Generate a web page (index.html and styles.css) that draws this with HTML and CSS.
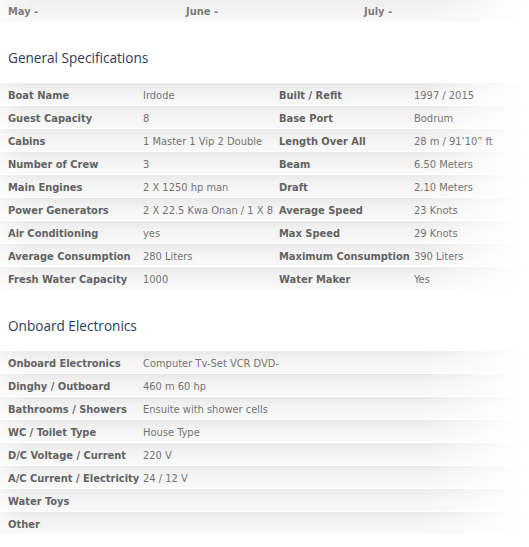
FILE: index.html
```html
<!DOCTYPE html>
<html>
<head>
<meta charset="utf-8">
<link rel="stylesheet" href="styles.css">
</head>
<body>
<div class="months">
  <span>May -</span><span>June -</span><span>July -</span>
</div>

<h2 class="section-title">General Specifications</h2>
<div class="spec-table">
  <div class="row quad"><span class="lbl">Boat Name</span><span class="val">Irdode</span><span class="lbl">Built / Refit</span><span class="val">1997 / 2015</span></div>
  <div class="row quad"><span class="lbl">Guest Capacity</span><span class="val">8</span><span class="lbl">Base Port</span><span class="val">Bodrum</span></div>
  <div class="row quad"><span class="lbl">Cabins</span><span class="val">1 Master 1 Vip 2 Double</span><span class="lbl">Length Over All</span><span class="val">28 m / 91’10” ft</span></div>
  <div class="row quad"><span class="lbl">Number of Crew</span><span class="val">3</span><span class="lbl">Beam</span><span class="val">6.50 Meters</span></div>
  <div class="row quad"><span class="lbl">Main Engines</span><span class="val">2 X 1250 hp man</span><span class="lbl">Draft</span><span class="val">2.10 Meters</span></div>
  <div class="row quad"><span class="lbl">Power Generators</span><span class="val">2 X 22.5 Kwa Onan / 1 X 8</span><span class="lbl">Average Speed</span><span class="val">23 Knots</span></div>
  <div class="row quad"><span class="lbl">Air Conditioning</span><span class="val">yes</span><span class="lbl">Max Speed</span><span class="val">29 Knots</span></div>
  <div class="row quad"><span class="lbl">Average Consumption</span><span class="val">280 Liters</span><span class="lbl">Maximum Consumption</span><span class="val">390 Liters</span></div>
  <div class="row quad"><span class="lbl">Fresh Water Capacity</span><span class="val">1000</span><span class="lbl">Water Maker</span><span class="val">Yes</span></div>
</div>

<h2 class="section-title">Onboard Electronics</h2>
<div class="spec-table">
  <div class="row duo"><span class="lbl">Onboard Electronics</span><span class="val">Computer Tv-Set VCR DVD-</span></div>
  <div class="row duo"><span class="lbl">Dinghy / Outboard</span><span class="val">460 m 60 hp</span></div>
  <div class="row duo"><span class="lbl">Bathrooms / Showers</span><span class="val">Ensuite with shower cells</span></div>
  <div class="row duo"><span class="lbl">WC / Toilet Type</span><span class="val">House Type</span></div>
  <div class="row duo"><span class="lbl">D/C Voltage / Current</span><span class="val">220 V</span></div>
  <div class="row duo"><span class="lbl">A/C Current / Electricity</span><span class="val">24 / 12 V</span></div>
  <div class="row duo"><span class="lbl">Water Toys</span><span class="val"></span></div>
  <div class="row duo"><span class="lbl">Other</span><span class="val"></span></div>
</div>
</body>
</html>
```

FILE: styles.css
```css
html, body {
  margin: 0;
  padding: 0;
  background: #ffffff;
}

body {
  font-family: "DejaVu Sans Condensed", "DejaVu Sans", sans-serif;
  font-size: 11px;
  color: #777777;
}

.months {
  display: grid;
  grid-template-columns: 178px 178px 1fr;
  align-items: center;
  height: 22px;
  background:
    linear-gradient(to right, rgba(255,255,255,0.6) 0%, rgba(255,255,255,0) 6%, rgba(255,255,255,0) 82%, #ffffff 99%),
    linear-gradient(to bottom, #eeeeee 0%, #f4f4f4 50%, #f8f8f8 100%);
}

.months span {
  padding-left: 8px;
  padding-top: 1px;
  font-weight: bold;
  color: #7c7c7c;
}

.section-title {
  margin: 26px 0 15px;
  padding-left: 8px;
  font-family: "Open Sans", sans-serif;
  font-weight: normal;
  font-size: 13.6px;
  line-height: 20px;
  color: #2d3c5c;
}

.spec-table {
  display: flex;
  flex-direction: column;
}

.row {
  display: grid;
  align-items: center;
  height: 22px;
  border-bottom: 1px solid #ffffff;
  white-space: nowrap;
  background:
    linear-gradient(to right, rgba(255,255,255,0.5) 0%, rgba(255,255,255,0) 5%, rgba(255,255,255,0) 80%, #ffffff 99%),
    linear-gradient(to bottom, #e9e9e9 0%, #f2f2f2 35%, #f6f6f6 70%, #f9f9f9 100%);
}

.quad {
  grid-template-columns: 135px 136px 135px 1fr;
}

.duo {
  grid-template-columns: 135px 1fr;
}

.row > span {
  padding-left: 8px;
  padding-top: 2px;
  min-width: 0;
}

.lbl {
  font-weight: bold;
  color: #636363;
}

.val {
  color: #747474;
}
```
